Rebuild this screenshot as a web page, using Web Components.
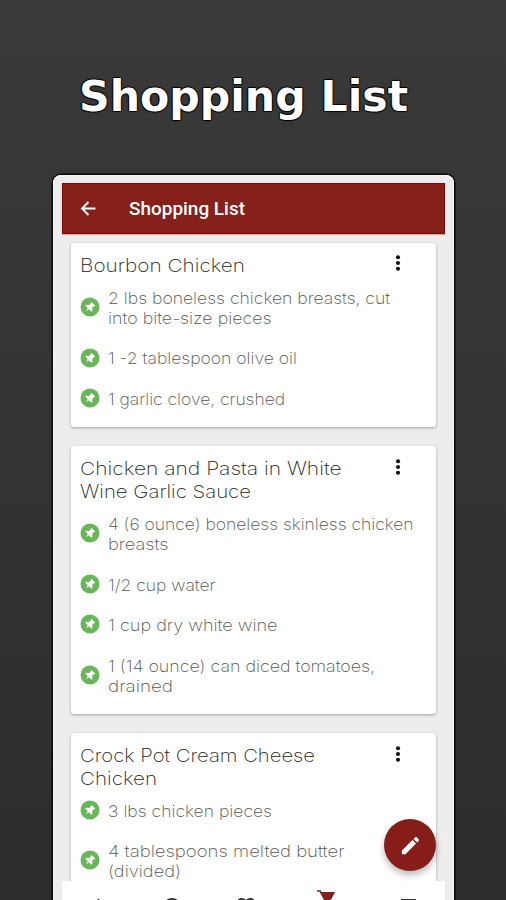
<!DOCTYPE html>
<html lang="en">
<head>
<meta charset="utf-8">
<title>Shopping List</title>
<style>
html,body{margin:0;height:900px;overflow:hidden;background:#303030}
</style>
</head>
<body>
<promo-page></promo-page>
<script>
const define = (name, html, setup) => customElements.define(name, class extends HTMLElement {
  connectedCallback() {
    if (this.shadowRoot) return;
    const t = document.createElement('template');
    t.innerHTML = html;
    this.attachShadow({mode: 'open'}).append(t.content.cloneNode(true));
    if (setup) setup(this, this.shadowRoot);
  }
});

// One line of text, stretched horizontally to the width in its "w" attribute.
define('fit-line', `<style>
:host{display:block;white-space:nowrap;height:1lh}
span{display:inline-block;transform-origin:0 50%}
</style><span><slot></slot></span>`, (host, root) => {
  const s = root.querySelector('span');
  const fit = () => {
    s.style.transform = 'none';
    const w = s.getBoundingClientRect().width;
    if (w) s.style.transform = `scaleX(${host.getAttribute('w') / w})`;
  };
  fit();
  requestAnimationFrame(fit);
});

define('pin-icon', `<style>:host{display:block;width:20px;height:20px;flex:none}svg{display:block}</style>
<svg width="20" height="20" viewBox="0 0 20 20"><circle cx="10" cy="10" r="9.5" fill="#67b657"/>
<path d="M11.6 5 15.2 8.6 14.2 9.6 13.3 9.4 12.3 10.9 12.4 13.8 11.3 14.7 8.9 12.3 6 14.2 7.700 11.100 5.200 8.600 6.200 7.700 9 7.900 10.700 6.800 10.600 5.900Z" fill="#fff"/></svg>`);

define('list-item', `<style>
:host{display:grid;grid-template-columns:20px 1fr;column-gap:8px;align-items:center;font-size:16px;line-height:20.3px;color:#555}
pin-icon{margin-top:-2px}
</style><pin-icon></pin-icon><div><slot></slot></div>`);

define('more-icon', `<style>:host{display:block;width:6px;height:18px}svg{display:block}</style>
<svg width="6" height="18" viewBox="0 0 6 18" fill="#111"><circle cx="3" cy="3.3" r="2.05"/><circle cx="3" cy="9" r="2.05"/><circle cx="3" cy="14.7" r="2.05"/></svg>`);

define('recipe-card', `<style>
:host{display:block;box-sizing:border-box;padding:11.4px 10px 18.2px 8.700px;background:#fff;border-radius:3px;box-shadow:0 1px 3px rgba(0,0,0,.32)}
header{display:flex;justify-content:space-between;font-size:18px;line-height:22.7px;color:#222;margin-bottom:10.6px;padding-right:25.500px}
header div{padding:.6px 0 0 .3px;margin-bottom:-.6px}
.items{display:flex;flex-direction:column;gap:20.2px}
</style><header><div><slot name="title"></slot></div><more-icon></more-icon></header><div class="items"><slot></slot></div>`);

define('app-bar', `<style>
:host{display:flex;align-items:center;height:51px;background:#86201b;box-shadow:inset 0 0 0 1px #7c0d0c,0 1px 1px #d7aaa8;color:#fff;font:500 18.2px/24px Roboto,sans-serif}
svg{margin:-1px 31.500px 0 18px;display:block}
</style><svg width="17" height="17" viewBox="0 0 17 17" fill="none" stroke="#fff" stroke-width="1.9"><path d="M15.500 8.500H2M8.500 2 2 8.500 8.500 15"/></svg><fit-line w="116">Shopping List</fit-line>`);

define('edit-button', `<style>
:host{display:grid;place-items:center;width:52px;height:52px;border-radius:50%;background:#861d19;box-shadow:0 4px 7px rgba(0,0,0,.27)}
svg{display:block}
</style><svg width="23" height="23" viewBox="0 0 24 24" fill="#fff"><path d="M3 17.25V21h3.75L17.81 9.94l-3.75-3.75L3 17.25zM20.71 7.04c.39-.39.39-1.02 0-1.41l-2.34-2.34c-.39-.39-1.02-.39-1.41 0l-1.83 1.83 3.75 3.75 1.83-1.83z"/></svg>`);

define('bottom-nav', `<style>:host{display:block;background:#fff;height:20px;overflow:hidden}svg{display:block}</style>
<svg width="383" height="20" viewBox="0 0 383 20" fill="#333">
<path d="M27 28 36.500 17.500 46 28Z"/><circle cx="110" cy="26" r="9"/>
<path d="M174.500 24C174.500 15.500 181.500 16 184 19 186.500 16 193.500 15.500 193.500 24Z"/>
<rect x="339" y="18" width="15" height="8"/>
<path d="M255 9.200H258.500L259.700 11H273L269.500 18 268 19H262L257.500 10.700H255Z" fill="#86201b"/><path d="M262 18.300 260 22H264Z" fill="#86201b"/></svg>`);

define('phone-frame', `<style>
:host{display:flex;flex-direction:column;box-sizing:border-box;width:401px;height:726px;padding:8px 9px 0;background:#ededed;border-radius:8px 8px 0 0;box-shadow:inset 0 0 0 1px #f6f6f6,0 0 0 1.500px #080808;position:relative}
.list{flex:1;min-height:0;overflow:hidden;padding:9px 9px 0;display:flex;flex-direction:column;gap:19px}
::slotted(recipe-card){flex:none}
bottom-nav{flex:none}
edit-button{position:absolute;left:331px;top:644px}
</style><app-bar></app-bar><div class="list"><slot></slot></div><bottom-nav></bottom-nav><edit-button></edit-button>`);

define('promo-page', `<style>
:host{display:block;height:900px;overflow:hidden;background:linear-gradient(#393939,#2d2d2d);font-family:Inter,"Noto Sans",sans-serif;font-weight:250}
h1{margin:0;height:174px;padding:69px 0 0 79px;box-sizing:border-box;font:bold 42.500px/56px "DejaVu Sans",sans-serif;color:#fff;text-shadow:1px 0 1px #000,-1px 0 1px #000,0 1px 1px #000,0 -1px 1px #000}
phone-frame{margin:1px 0 0 53px}
</style>
<h1><fit-line w="329">Shopping List</fit-line></h1>
<phone-frame>
<recipe-card>
<fit-line slot="title" w="165">Bourbon Chicken</fit-line>
<list-item><fit-line w="282">2 lbs boneless chicken breasts, cut</fit-line><fit-line w="163.500">into bite-size pieces</fit-line></list-item>
<list-item><fit-line w="189">1 -2 tablespoon olive oil</fit-line></list-item>
<list-item><fit-line w="177">1 garlic clove, crushed</fit-line></list-item>
</recipe-card>
<recipe-card>
<fit-line slot="title" w="261.500">Chicken and Pasta in White</fit-line><fit-line slot="title" w="171">Wine Garlic Sauce</fit-line>
<list-item><fit-line w="305.500">4 (6 ounce) boneless skinless chicken</fit-line><fit-line w="60.500">breasts</fit-line></list-item>
<list-item><fit-line w="107.500">1/2 cup water</fit-line></list-item>
<list-item><fit-line w="169.500">1 cup dry white wine</fit-line></list-item>
<list-item><fit-line w="267">1 (14 ounce) can diced tomatoes,</fit-line><fit-line w="65">drained</fit-line></list-item>
</recipe-card>
<recipe-card>
<fit-line slot="title" w="235">Crock Pot Cream Cheese</fit-line><fit-line slot="title" w="77">Chicken</fit-line>
<list-item><fit-line w="164">3 lbs chicken pieces</fit-line></list-item>
<list-item><fit-line w="236.500">4 tablespoons melted butter</fit-line><fit-line w="73">(divided)</fit-line></list-item>
</recipe-card>
</phone-frame>`);
</script>
</body>
</html>
